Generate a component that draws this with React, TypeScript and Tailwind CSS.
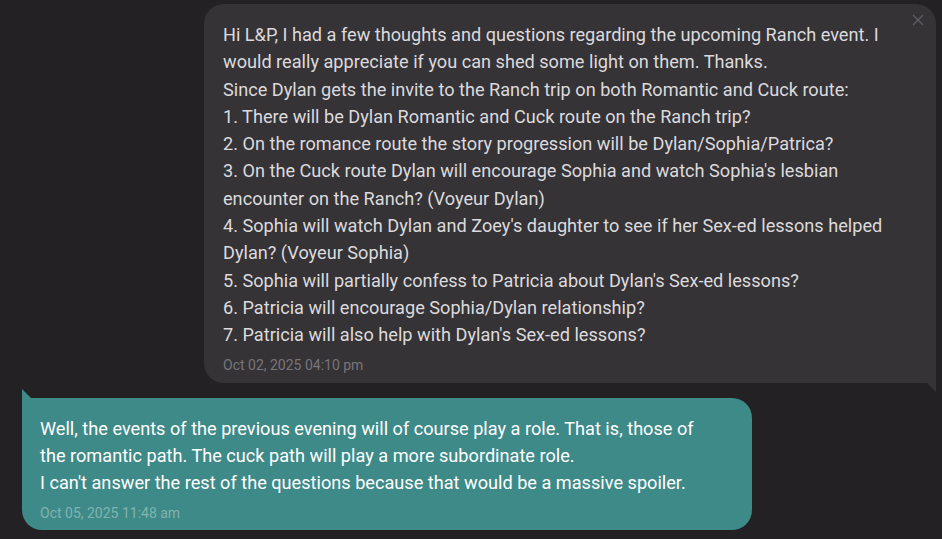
import React from "react";

const question = [
  "Hi L&P, I had a few thoughts and questions regarding the upcoming Ranch event. I",
  "would really appreciate if you can shed some light on them. Thanks.",
  "Since Dylan gets the invite to the Ranch trip on both Romantic and Cuck route:",
  "1. There will be Dylan Romantic and Cuck route on the Ranch trip?",
  "2. On the romance route the story progression will be Dylan/Sophia/Patrica?",
  "3. On the Cuck route Dylan will encourage Sophia and watch Sophia's lesbian",
  "encounter on the Ranch? (Voyeur Dylan)",
  "4. Sophia will watch Dylan and Zoey's daughter to see if her Sex-ed lessons helped",
  "Dylan? (Voyeur Sophia)",
  "5. Sophia will partially confess to Patricia about Dylan's Sex-ed lessons?",
  "6. Patricia will encourage Sophia/Dylan relationship?",
  "7. Patricia will also help with Dylan's Sex-ed lessons?",
];

const answer = [
  "Well, the events of the previous evening will of course play a role. That is, those of",
  "the romantic path. The cuck path will play a more subordinate role.",
  "I can't answer the rest of the questions because that would be a massive spoiler.",
];

export default function App() {
  return (
    <div className="h-[539px] w-[942px] overflow-hidden bg-[#232124] font-['Roboto',sans-serif]">
      <div className="flex flex-col gap-[15px] pt-1 pl-[22px] pr-[6px]">
        {/* sent message */}
        <div className="flex justify-end">
          <div className="relative w-[732px] rounded-[20px] rounded-br-none bg-[#353336] pt-[17px] pb-[8px] pl-[19px] pr-[19px]">
            <button className="absolute right-[11px] top-[9px] text-[#5f5d61]">
              <svg width="14" height="14" viewBox="0 0 14 14" fill="none" stroke="currentColor" strokeWidth="1.3">
                <path d="M2 2l10 10M12 2L2 12" />
              </svg>
            </button>
            <div className="text-[18.15px] leading-[27.3px] text-[#dcdadd]">
              {question.map((l, i) => (
                <div key={i} className="whitespace-nowrap">{l}</div>
              ))}
            </div>
            <div className="mt-[6px] text-[14px] leading-[20px] text-[#77757a]">Oct 02, 2025 04:10 pm</div>
            <svg className="absolute -bottom-[9px] right-0" width="9" height="9" viewBox="0 0 9 9">
              <path d="M0 0h9v9z" fill="#353336" />
            </svg>
          </div>
        </div>

        {/* received message */}
        <div className="flex justify-start">
          <div className="relative w-[730px] rounded-[20px] rounded-tl-none bg-[#3e8a88] pt-[17px] pb-[7px] pl-[18px] pr-[18px]">
            <svg className="absolute -top-[9px] left-0" width="9" height="9" viewBox="0 0 9 9">
              <path d="M0 0l9 9H0z" fill="#3e8a88" />
            </svg>
            <div className="text-[18.15px] leading-[27.3px] text-white">
              {answer.map((l, i) => (
                <div key={i} className="whitespace-nowrap">{l}</div>
              ))}
            </div>
            <div className="mt-[7px] text-[14px] leading-[20px] text-[#82b3b1]">Oct 05, 2025 11:48 am</div>
          </div>
        </div>
      </div>
    </div>
  );
}
